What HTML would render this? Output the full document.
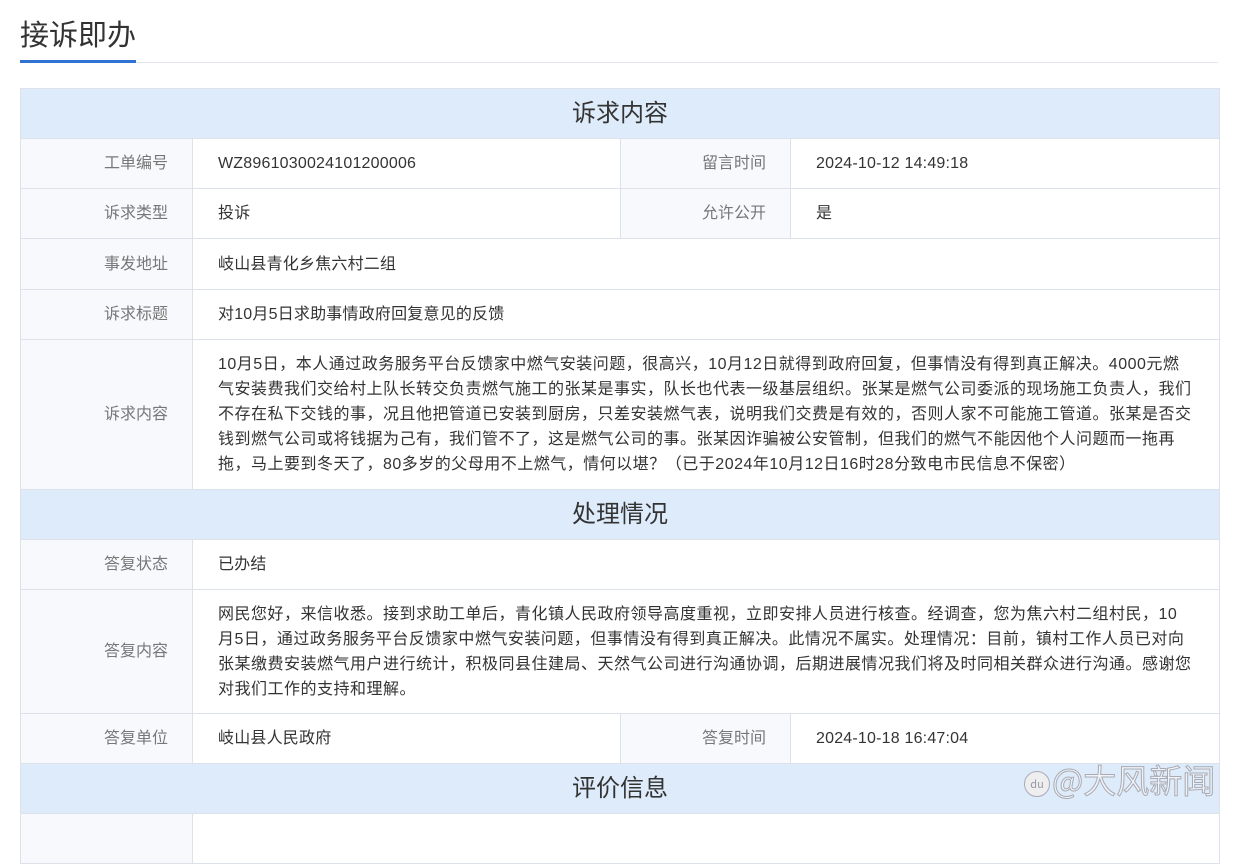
<!DOCTYPE html>
<html><head><meta charset="utf-8"><style>
*{margin:0;padding:0;box-sizing:border-box}
body{width:1242px;height:821px;overflow:hidden;background:#fff;font-family:"Liberation Sans","Noto Sans CJK SC",sans-serif;color:#333;position:relative}
h1{position:absolute;left:20px;top:12px;font-size:29px;font-weight:normal;color:#333}
.ul{position:absolute;left:20px;top:62px;width:1198px;height:1px;background:#e4e7ed}
.ub{position:absolute;left:20px;top:60px;width:116px;height:3px;background:#2f72d2}
table{position:absolute;left:20px;top:88px;width:1199px;border-collapse:collapse;table-layout:fixed}
td{border:1px solid #dde2ea;font-size:16px;padding:0 25px;line-height:25px;letter-spacing:0.2px}
td.l{background:#f7f9fc;color:#777;text-align:right;padding-right:24px;letter-spacing:0}
td.w{white-space:nowrap;overflow:hidden;padding-right:0;letter-spacing:0.5px}
tr.h td{background:#deebfa;text-align:center;font-size:24px;color:#333;height:49px;letter-spacing:0}
tr{height:50px}
.wm{position:absolute;left:1024px;top:755px;font-size:33px;color:rgba(245,245,248,.85);-webkit-text-stroke:1px #a8abb4;font-family:"Noto Sans CJK SC",sans-serif}
.paw{display:inline-block;width:26px;height:26px;border-radius:50%;background:#eee;border:1px solid #aab;font-size:11px;-webkit-text-stroke:0;color:#99a;text-align:center;line-height:24px;vertical-align:middle;margin-right:2px}
</style></head><body>
<h1>接诉即办</h1><div class="ul"></div><div class="ub"></div>
<table>
<colgroup><col style="width:172px"><col style="width:428px"><col style="width:170px"><col style="width:429px"></colgroup>
<tr class="h"><td colspan="4">诉求内容</td></tr>
<tr><td class="l">工单编号</td><td>WZ8961030024101200006</td><td class="l">留言时间</td><td>2024-10-12 14:49:18</td></tr>
<tr><td class="l">诉求类型</td><td>投诉</td><td class="l">允许公开</td><td>是</td></tr>
<tr style="height:51px"><td class="l">事发地址</td><td colspan="3">岐山县青化乡焦六村二组</td></tr>
<tr><td class="l">诉求标题</td><td colspan="3">对10月5日求助事情政府回复意见的反馈</td></tr>
<tr style="height:150px"><td class="l">诉求内容</td><td class="w" colspan="3">10月5日，本人通过政务服务平台反馈家中燃气安装问题，很高兴，10月12日就得到政府回复，但事情没有得到真正解决。4000元燃<br>气安装费我们交给村上队长转交负责燃气施工的张某是事实，队长也代表一级基层组织。张某是燃气公司委派的现场施工负责人，我们<br>不存在私下交钱的事，况且他把管道已安装到厨房，只差安装燃气表，说明我们交费是有效的，否则人家不可能施工管道。张某是否交<br>钱到燃气公司或将钱据为己有，我们管不了，这是燃气公司的事。张某因诈骗被公安管制，但我们的燃气不能因他个人问题而一拖再<br>拖，马上要到冬天了，80多岁的父母用不上燃气，情何以堪？（已于2024年10月12日16时28分致电市民信息不保密）</td></tr>
<tr class="h"><td colspan="4">处理情况</td></tr>
<tr><td class="l">答复状态</td><td colspan="3">已办结</td></tr>
<tr style="height:124px"><td class="l">答复内容</td><td class="w" colspan="3">网民您好，来信收悉。接到求助工单后，青化镇人民政府领导高度重视，立即安排人员进行核查。经调查，您为焦六村二组村民，10<br>月5日，通过政务服务平台反馈家中燃气安装问题，但事情没有得到真正解决。此情况不属实。处理情况：目前，镇村工作人员已对向<br>张某缴费安装燃气用户进行统计，积极同县住建局、天然气公司进行沟通协调，后期进展情况我们将及时同相关群众进行沟通。感谢您<br>对我们工作的支持和理解。</td></tr>
<tr><td class="l">答复单位</td><td>岐山县人民政府</td><td class="l">答复时间</td><td>2024-10-18 16:47:04</td></tr>
<tr class="h"><td colspan="4">评价信息</td></tr>
<tr><td class="l"></td><td colspan="3"></td></tr>
</table>
<div class="wm"><span class="paw">du</span>@大风新闻</div>
</body></html>
